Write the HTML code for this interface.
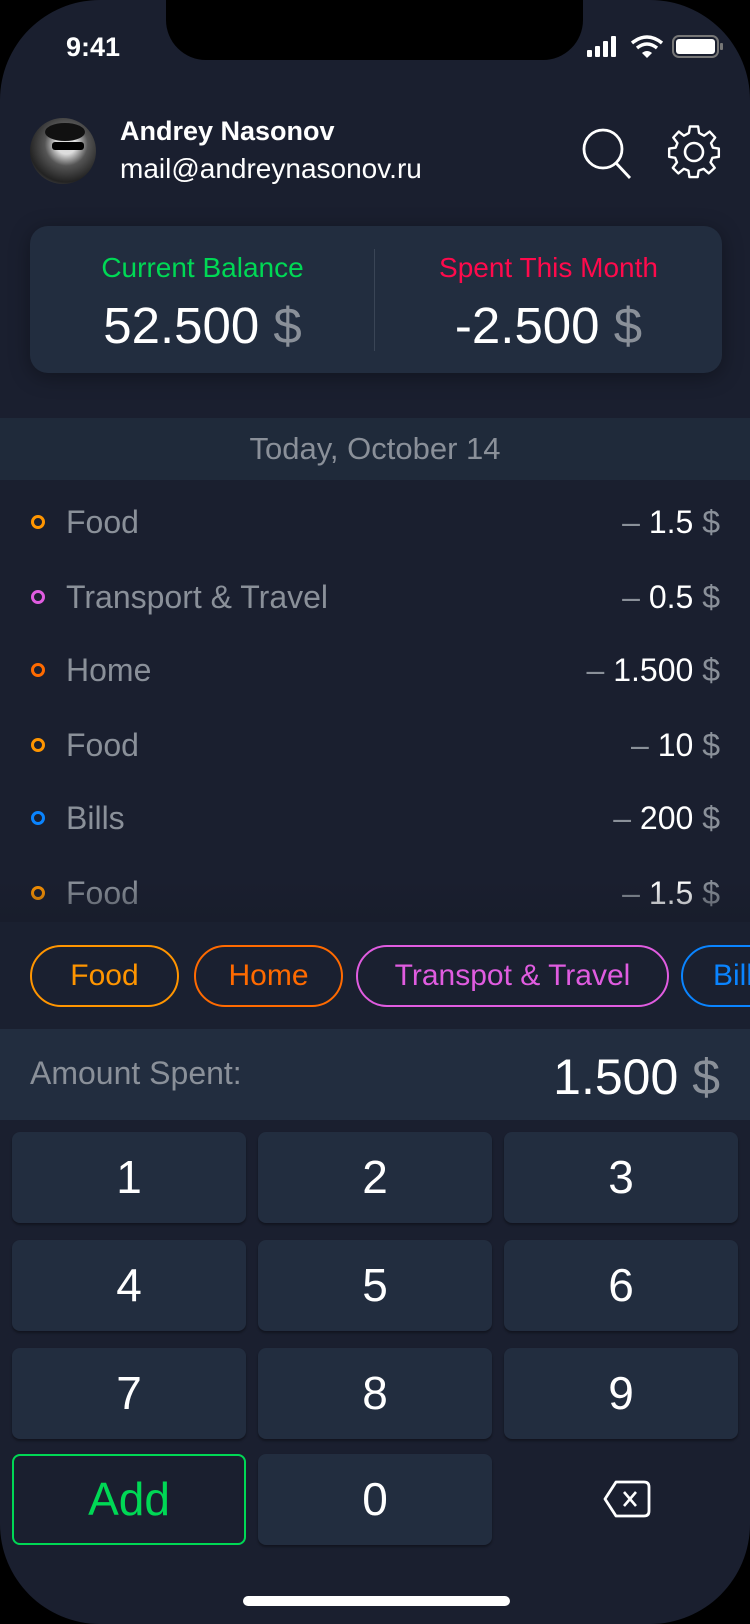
<!DOCTYPE html>
<html><head><meta charset="utf-8"><style>
*{margin:0;padding:0;box-sizing:border-box}
body{width:750px;height:1624px;background:#000;font-family:"Liberation Sans",sans-serif;overflow:hidden;position:relative}
.screen{position:absolute;left:0;top:0;width:750px;height:1624px;background:#1a1f2f;border-radius:100px;overflow:hidden}
.abs{position:absolute}
.notch{left:166px;top:-2px;width:417px;height:62px;background:#000;border-radius:0 0 40px 40px}
.t{white-space:nowrap}
.row{position:absolute;left:0;width:750px;height:40px}
.dot{position:absolute;left:31px;top:13px;width:14px;height:14px;border-radius:50%;border:3px solid}
.lbl{position:absolute;left:66px;top:0;font-size:32px;color:#8a9099;line-height:40px}
.amt{position:absolute;right:30px;top:0;font-size:32px;color:#fff;line-height:40px}
.amt span{color:#8a9099}
.amt b{font-weight:normal;color:#8a9099}
.chip{position:absolute;top:945px;height:62px;border:2px solid;border-radius:31px;font-size:30px;line-height:58px;text-align:center}
.key{position:absolute;width:234px;height:91px;background:#222d3f;border-radius:8px;color:#fff;font-size:46px;text-align:center;line-height:91px;box-shadow:0 2px 2px rgba(0,0,0,.35)}
</style></head><body>
<div class="screen">
<div class="abs notch"></div>
<div class="abs t" style="left:66px;top:32px;font-size:27px;color:#fff;font-weight:bold">9:41</div>
<svg class="abs" style="left:585px;top:33px" width="140" height="28" viewBox="0 0 140 28">
<rect x="2" y="17" width="5" height="7" rx="1" fill="#fff"/><rect x="10" y="13" width="5" height="11" rx="1" fill="#fff"/><rect x="18" y="8" width="5" height="16" rx="1" fill="#fff"/><rect x="26" y="3" width="5" height="21" rx="1" fill="#fff"/>
<path d="M47 10 Q62 -2 77 10" stroke="#fff" stroke-width="3.5" fill="none"/><path d="M52 15 Q62 7 72 15" stroke="#fff" stroke-width="3.5" fill="none"/><path d="M57 20 L62 25 L67 20 Q62 16 57 20Z" fill="#fff"/>
<rect x="88" y="3" width="45" height="21" rx="6" stroke="#777" stroke-width="2" fill="none"/><rect x="91" y="6" width="39" height="15" rx="3" fill="#fff"/><rect x="135" y="10" width="3" height="7" rx="1" fill="#777"/>
</svg>
<div class="abs" style="left:30px;top:118px;width:66px;height:66px;border-radius:50%;background:radial-gradient(circle at 55% 40%,#ddd 0 18%,#555 40%,#222 70%,#888 100%);overflow:hidden"><div style="position:absolute;left:22px;top:24px;width:32px;height:8px;background:#000;border-radius:3px"></div><div style="position:absolute;left:15px;top:5px;width:40px;height:18px;background:#111;border-radius:50%"></div></div>
<div class="abs t" style="left:120px;top:116px;font-size:27px;color:#fff;font-weight:bold">Andrey Nasonov</div>
<div class="abs t" style="left:120px;top:153px;font-size:28px;color:#fff">mail@andreynasonov.ru</div>
<svg class="abs" style="left:580px;top:126px" width="56" height="56" viewBox="0 0 56 56"><circle cx="23" cy="23" r="19" stroke="#fff" stroke-width="2.8" fill="none"/><path d="M36 37 L50 52" stroke="#fff" stroke-width="2.8"/></svg>
<svg class="abs" style="left:666px;top:124px" width="56" height="56" viewBox="-28 -28 56 56"><path d="M-4.5 -25 L4.5 -25 L5.5 -18 L11 -15 L17 -19.5 L23 -13 L18.5 -7 L20.5 -2 L27 -1 L27 8 L20 9 L18 14 L22.5 20 L16 26 L10.5 21 L5 23 L4 30 L-5 30 L-6 23 L-11 21 L-17 26 L-23 20 L-18.5 14 L-20.5 9 L-27 8 L-27 -1 L-20 -2 L-18 -7 L-22.5 -13 L-16.5 -19.5 L-11 -15 L-5.5 -18 Z" transform="translate(0,-2.5) scale(0.92)" stroke="#fff" stroke-width="2.6" fill="none" stroke-linejoin="round"/><circle cx="0" cy="0" r="9" stroke="#fff" stroke-width="2.6" fill="none"/></svg>
<div class="abs" style="left:30px;top:226px;width:692px;height:147px;background:#222d3f;border-radius:18px;box-shadow:0 4px 20px rgba(0,0,0,.35)"></div>
<div class="abs" style="left:374px;top:249px;width:1px;height:102px;background:#3a4556"></div>
<div class="abs t" style="left:30px;width:345px;text-align:center;top:252px;font-size:28px;color:#00d855">Current Balance</div>
<div class="abs t" style="left:375px;width:347px;text-align:center;top:252px;font-size:28px;color:#ff0a4c">Spent This Month</div>
<div class="abs t" style="left:30px;width:345px;text-align:center;top:296px;font-size:51px;color:#fff">52.500 <span style="color:#8a9099">$</span></div>
<div class="abs t" style="left:375px;width:347px;text-align:center;top:296px;font-size:51px;color:#fff">-2.500 <span style="color:#8a9099">$</span></div>
<div class="abs" style="left:0;top:418px;width:750px;height:62px;background:#1f2a3a"></div>
<div class="abs t" style="left:0;width:750px;text-align:center;top:431px;font-size:31px;color:#8a9099">Today, October 14</div>
<div class="row" style="top:502px"><div class="dot" style="border-color:#ff9500"></div><div class="lbl">Food</div><div class="amt"><b>–</b> 1.5 <span>$</span></div></div>
<div class="row" style="top:577px"><div class="dot" style="border-color:#e05ce0"></div><div class="lbl">Transport &amp; Travel</div><div class="amt"><b>–</b> 0.5 <span>$</span></div></div>
<div class="row" style="top:650px"><div class="dot" style="border-color:#ff6a00"></div><div class="lbl">Home</div><div class="amt"><b>–</b> 1.500 <span>$</span></div></div>
<div class="row" style="top:725px"><div class="dot" style="border-color:#ff9500"></div><div class="lbl">Food</div><div class="amt"><b>–</b> 10 <span>$</span></div></div>
<div class="row" style="top:798px"><div class="dot" style="border-color:#0a84ff"></div><div class="lbl">Bills</div><div class="amt"><b>–</b> 200 <span>$</span></div></div>
<div class="row" style="top:873px"><div class="dot" style="border-color:#ff9500"></div><div class="lbl">Food</div><div class="amt"><b>–</b> 1.5 <span>$</span></div></div>
<div class="abs" style="left:0;top:880px;width:750px;height:42px;background:linear-gradient(rgba(22,27,40,0),rgba(22,27,40,.5))"></div>
<div class="abs" style="left:0;top:922px;width:750px;height:107px;background:#1a2030"></div>
<div class="chip" style="left:30px;width:149px;border-color:#ff9500;color:#ff9500">Food</div>
<div class="chip" style="left:194px;width:149px;border-color:#ff6a00;color:#ff6a00">Home</div>
<div class="chip" style="left:356px;width:313px;border-color:#e05ce0;color:#e05ce0">Transpot &amp; Travel</div>
<div class="chip" style="left:681px;width:149px;border-color:#0a84ff;color:#0a84ff;text-align:left;padding-left:30px">Bills</div>
<div class="abs" style="left:0;top:1029px;width:750px;height:91px;background:#222d3f"></div>
<div class="abs t" style="left:30px;top:1055px;font-size:32px;color:#8a9099">Amount Spent:</div>
<div class="abs t" style="right:30px;top:1048px;font-size:50px;color:#fff">1.500 <span style="color:#8a9099">$</span></div>
<div class="key" style="left:12px;top:1132px">1</div>
<div class="key" style="left:258px;top:1132px">2</div>
<div class="key" style="left:504px;top:1132px">3</div>
<div class="key" style="left:12px;top:1240px">4</div>
<div class="key" style="left:258px;top:1240px">5</div>
<div class="key" style="left:504px;top:1240px">6</div>
<div class="key" style="left:12px;top:1348px">7</div>
<div class="key" style="left:258px;top:1348px">8</div>
<div class="key" style="left:504px;top:1348px">9</div>
<div class="key" style="left:12px;top:1454px;background:transparent;border:2px solid #00d855;color:#00d855;line-height:87px;box-shadow:none">Add</div>
<div class="key" style="left:258px;top:1454px">0</div>
<svg class="abs" style="left:602px;top:1479px" width="50" height="40" viewBox="0 0 50 40"><path d="M14 3 L42 3 Q47 3 47 8 L47 32 Q47 37 42 37 L14 37 L3 20 Z" stroke="#fff" stroke-width="2.8" fill="none" stroke-linejoin="round"/><path d="M22 13 L34 27 M34 13 L22 27" stroke="#fff" stroke-width="2.6"/></svg>
<div class="abs" style="left:243px;top:1596px;width:267px;height:10px;border-radius:5px;background:#fff"></div>
</div>
</body></html>
